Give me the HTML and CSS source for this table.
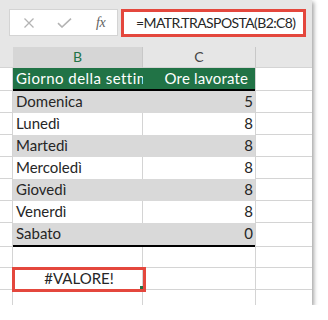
FILE: index.html
```html
<!DOCTYPE html>
<html lang="it">
<head>
<meta charset="utf-8">
<link rel="stylesheet" href="styles.css">
</head>
<body>
<div class="sheet">
  <div class="fbar">
    <div class="namebox">
      <svg class="ico" width="12" height="10" viewBox="0 0 12 10"><path d="M1.5 0.5 L10.5 9.5 M10.5 0.5 L1.5 9.5" stroke="#b3b3b3" stroke-width="1.3" fill="none"/></svg>
      <svg class="ico" width="15" height="10" viewBox="0 0 15 10"><path d="M1 5.2 L5 9 L14 0.6" stroke="#b3b3b3" stroke-width="1.6" fill="none"/></svg>
      <span class="fx">fx</span>
    </div>
    <div class="formula">=MATR.TRASPOSTA(B2:C8)</div>
  </div>
  <div class="row colheads">
    <div class="rh"></div>
    <div class="b sel">B</div>
    <div class="c">C</div>
    <div class="d"></div>
  </div>
  <div class="row hdr">
    <div class="rh"></div>
    <div class="b">Giorno della settimana</div>
    <div class="c num">Ore lavorate</div>
    <div class="d"></div>
  </div>
  <div class="row data gray">
    <div class="rh"></div><div class="b">Domenica</div><div class="c num">5</div><div class="d"></div>
  </div>
  <div class="row data">
    <div class="rh"></div><div class="b">Lunedì</div><div class="c num">8</div><div class="d"></div>
  </div>
  <div class="row data gray">
    <div class="rh"></div><div class="b">Martedì</div><div class="c num">8</div><div class="d"></div>
  </div>
  <div class="row data">
    <div class="rh"></div><div class="b">Mercoledì</div><div class="c num">8</div><div class="d"></div>
  </div>
  <div class="row data gray">
    <div class="rh"></div><div class="b">Giovedì</div><div class="c num">8</div><div class="d"></div>
  </div>
  <div class="row data">
    <div class="rh"></div><div class="b">Venerdì</div><div class="c num">8</div><div class="d"></div>
  </div>
  <div class="row data gray last">
    <div class="rh"></div><div class="b">Sabato</div><div class="c num">0</div><div class="d"></div>
  </div>
  <div class="row empty first">
    <div class="rh"></div><div class="b"></div><div class="c"></div><div class="d"></div>
  </div>
  <div class="row empty">
    <div class="rh"></div><div class="b err">#VALORE!<span class="mark"></span><span class="handle"></span></div><div class="c"></div><div class="d"></div>
  </div>
  <div class="row empty">
    <div class="rh"></div><div class="b"></div><div class="c"></div><div class="d"></div>
  </div>
</div>
</body>
</html>
```
FILE: styles.css
```css
html, body {
  margin: 0;
  padding: 0;
  background: #ffffff;
}
body {
  font-family: "Lato", "Open Sans", sans-serif;
  color: #262626;
}
.sheet {
  width: 312px;
  height: 305px;
  overflow: hidden;
  background: #e6e6e6;
  box-shadow: 2px 2px 4px rgba(0, 0, 0, 0.35);
}
.fbar {
  height: 47px;
  box-sizing: border-box;
  padding: 9px 0 0 9px;
  display: flex;
  align-items: flex-start;
  gap: 3px;
}
.namebox {
  width: 109px;
  height: 27px;
  box-sizing: border-box;
  background: #ffffff;
  border: 1px solid #d4d4d4;
  display: flex;
  align-items: center;
  padding-left: 13px;
}
.ico { display: block; }
.ico:nth-child(2) { margin-left: 22px; }
.fx {
  margin-left: 24px;
  font-family: "Liberation Serif", serif;
  font-style: italic;
  font-size: 14px;
  color: #5f5f5f;
  letter-spacing: -0.5px;
}
.formula {
  width: 185px;
  height: 28px;
  box-sizing: border-box;
  background: #ffffff;
  border: 3px solid #e4473d;
  padding-left: 12px;
  font-size: 14px;
  letter-spacing: -0.6px;
  line-height: 22px;
  color: #262626;
  white-space: nowrap;
  overflow: hidden;
}
.row {
  display: flex;
  height: 22px;
  box-sizing: border-box;
  font-size: 15px;
  line-height: 21px;
}
.row > div {
  box-sizing: border-box;
  white-space: nowrap;
  overflow: hidden;
  height: 100%;
}
.rh {
  width: 13px;
  flex: none;
  background: #ffffff;
  border-right: 1px solid #d4d4d4;
  border-bottom: 1px solid #d4d4d4;
}
.b { width: 130px; flex: none; padding-left: 3px; }
.c { width: 112px; flex: none; }
.d {
  flex: 1;
  background: #ffffff;
  border-left: 1px solid #d4d4d4;
  border-bottom: 1px solid #d4d4d4;
}
.num { text-align: right; padding-right: 2px; }

.colheads { height: 21px; font-size: 14px; line-height: 20px; }
.colheads .rh { background: #e6e6e6; border-right: none; }
.colheads .b, .colheads .c {
  text-align: center;
  padding: 0;
  color: #444444;
  border-bottom: 1px solid #d4d4d4;
}
.colheads .b { border-right: 1px solid #c8c8c8; }
.colheads .sel { background: #d6d6d6; color: #217346; }
.colheads .d { background: #e6e6e6; border-left: 1px solid #c8c8c8; border-bottom: 1px solid #d4d4d4; }

.hdr { height: 23px; }
.hdr .b, .hdr .c {
  background: #217346;
  color: #ffffff;
  border-bottom: 2px solid #000000;
}
.hdr .b { letter-spacing: 0.45px; }
.hdr .c { padding-right: 7px; letter-spacing: 0.15px; }

.data .b, .data .c { background: #ffffff; }
.data .b { border-right: 1px solid #d4d4d4; }
.data.gray .b, .data.gray .c { background: #d9d9d9; }
.data.gray .b { border-right: none; }
.data.last { height: 24px; }
.data.last .b, .data.last .c { border-bottom: 2px solid #000000; }

.empty .b, .empty .c { background: #ffffff; border-bottom: 1px solid #d4d4d4; }
.empty .b { border-right: 1px solid #d4d4d4; }
.empty.first { height: 21px; }

.err { text-align: center; position: relative; overflow: visible !important; }
.mark {
  position: absolute;
  left: -1px;
  top: -1px;
  width: 134px;
  height: 25px;
  box-sizing: border-box;
  border: 3px solid #e4473d;
}
.handle {
  position: absolute;
  left: 127px;
  top: 18px;
  width: 3px;
  height: 3px;
  background: #217346;
}
```
